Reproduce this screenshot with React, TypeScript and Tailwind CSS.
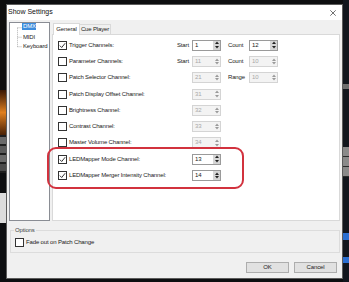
import React from "react";

type Spin = { value: string; enabled: boolean };
type Row = {
  label: string;
  checked: boolean;
  first?: Spin;
  firstLabel?: string;
  second?: Spin;
  secondLabel?: string;
};

const rows: Row[] = [
  { label: "Trigger Channels:", checked: true, firstLabel: "Start", first: { value: "1", enabled: true }, secondLabel: "Count", second: { value: "12", enabled: true } },
  { label: "Parameter Channels:", checked: false, firstLabel: "Start", first: { value: "11", enabled: false }, secondLabel: "Count", second: { value: "10", enabled: false } },
  { label: "Patch Selector Channel:", checked: false, first: { value: "21", enabled: false }, secondLabel: "Range", second: { value: "10", enabled: false } },
  { label: "Patch Display Offset Channel:", checked: false, first: { value: "31", enabled: false } },
  { label: "Brightness Channel:", checked: false, first: { value: "32", enabled: false } },
  { label: "Contrast Channel:", checked: false, first: { value: "33", enabled: false } },
  { label: "Master Volume Channel:", checked: false, first: { value: "34", enabled: false } },
  { label: "LEDMapper Mode Channel:", checked: true, first: { value: "13", enabled: true } },
  { label: "LEDMapper Merger Intensity Channel:", checked: true, first: { value: "14", enabled: true } },
];

function CheckBox({ checked }: { checked: boolean }) {
  return (
    <div className="w-[9px] h-[9px] shrink-0 border border-[#333] bg-white flex items-center justify-center">
      {checked && (
        <svg width="7" height="7" viewBox="0 0 7 7">
          <path d="M0.8 3.6 L2.7 5.5 L6.2 1.2" fill="none" stroke="#222" strokeWidth="0.9" />
        </svg>
      )}
    </div>
  );
}

function Arrow({ up, color }: { up: boolean; color: string }) {
  return (
    <svg width="4" height="3" viewBox="0 0 4 3">
      <path d={up ? "M0 3 L2 0.5 L4 3 Z" : "M0 0 L2 2.5 L4 0 Z"} fill={color} />
    </svg>
  );
}

function SpinBox({ spin }: { spin: Spin }) {
  const on = spin.enabled;
  return (
    <div
      className={`w-[29px] h-[11px] flex border ${
        on ? "border-[#9a9a9a] bg-white text-[#222]" : "border-[#d4d4d4] bg-[#f3f3f3] text-[#a8a8a8]"
      }`}
    >
      <div className="flex-1 pl-[2px] leading-[9px]">{spin.value}</div>
      <div className={`w-[7px] flex flex-col ${on ? "bg-[#d6d6d6]" : ""}`}>
        <div className="flex-1 flex items-center justify-center">
          <Arrow up color={on ? "#222" : "#9a9a9a"} />
        </div>
        <div className="flex-1 flex items-center justify-center">
          <Arrow up={false} color={on ? "#222" : "#9a9a9a"} />
        </div>
      </div>
    </div>
  );
}

function SettingRow({ row }: { row: Row }) {
  return (
    <div className="h-[16.3px] flex items-center">
      <div className="w-[119px] flex items-center gap-[2px]">
        <CheckBox checked={row.checked} />
        <span className="text-[#222] whitespace-nowrap">{row.label}</span>
      </div>
      <div className="w-[15px] text-[#222]">{row.firstLabel}</div>
      {row.first && <SpinBox spin={row.first} />}
      <div className="w-[7px]" />
      <div className="w-[21px] text-[#222]">{row.secondLabel}</div>
      {row.second && <SpinBox spin={row.second} />}
    </div>
  );
}

export default function App() {
  return (
    <div className="w-[349px] h-[282px] bg-[#0d0e10] flex overflow-hidden font-['Liberation_Sans',Arial,sans-serif] text-[6px] tracking-[-0.15px]">
      {/* ---------- background, left ---------- */}
      <div className="w-[6px] flex flex-col">
        <div className="h-[90px] bg-[#0e0e0e]" />
        <div className="h-[45px] bg-gradient-to-b from-[#3a1805] via-[#e0801e] to-[#4a2206]" />
        <div className="h-[38px] flex flex-col gap-[2px] py-[2px] bg-[#1e1e1e]">
          <div className="h-[7px] bg-[#6a6a6a]" />
          <div className="h-[7px] bg-[#5a5a5a]" />
          <div className="h-[7px] bg-[#6a6a6a]" />
          <div className="h-[7px] bg-[#4a4a4a]" />
        </div>
        <div className="h-[20px]" />
        <div className="h-[30px] bg-[#dcdcdc]" />
      </div>

      {/* ---------- dialog ---------- */}
      <div className="relative w-[337px] h-[275px] mt-[4px] border border-[#5c5c5c] bg-[#f0f0f0] flex flex-col">
        <div className="h-[15px] bg-white flex items-center justify-between pl-[1px] pr-[6px]">
          <span className="text-[7px] text-[#111] tracking-[0px]">Show Settings</span>
          <svg width="6" height="6" viewBox="0 0 6 6">
            <path d="M0.3 0.3 L5.7 5.7 M5.7 0.3 L0.3 5.7" stroke="#333" strokeWidth="0.7" />
          </svg>
        </div>

        <div className="flex-1 flex flex-col px-[2px]">
          <div className="mt-[2px] h-[199px] flex gap-[2px]">
            {/* ---------- tree ---------- */}
            <div className="w-[41px] border border-[#8a8d94] bg-white flex pl-[7px]">
              <svg width="5" height="30" viewBox="0 0 5 30" className="shrink-0">
                <path
                  d="M0.5 4.75 V23.75 M0.5 4.75 H5 M0.5 14.25 H5 M0.5 23.75 H5"
                  stroke="#a0a0a0"
                  strokeWidth="0.8"
                  strokeDasharray="1 1"
                  fill="none"
                />
              </svg>
              <div className="flex flex-col">
                <div className="h-[9.5px] flex items-start">
                  <span className="bg-[#3d8cdc] text-white px-[1px] leading-[7px] h-[7px] w-[14px]">DMX</span>
                </div>
                <div className="h-[9.5px] flex items-center px-[1px] text-[#222]">MIDI</div>
                <div className="h-[9.5px] flex items-center px-[1px] text-[#222]">Keyboard</div>
              </div>
            </div>

            {/* ---------- tabs ---------- */}
            <div className="flex-1 flex flex-col">
              <div className="h-[12px] flex items-end pl-[1px]">
                <div className="h-[12px] w-[27px] bg-white border border-b-0 border-[#d9d9d9] flex items-center justify-center text-[#222] -mb-px z-10">
                  General
                </div>
                <div className="h-[10px] w-[31px] bg-[#f0f0f0] border border-l-0 border-b-0 border-[#d9d9d9] flex items-center justify-center text-[#222]">
                  Cue Player
                </div>
              </div>
              <div className="flex-1 bg-white border border-[#d9d9d9] pl-[5px] pt-[2px]">
                {rows.map((r) => (
                  <SettingRow key={r.label} row={r} />
                ))}
              </div>
            </div>
          </div>

          {/* ---------- options ---------- */}
          <fieldset className="mt-[6px] ml-px mr-0 border border-[#dcdcdc] px-[4px] pb-[5px] pt-[4px]">
            <legend className="px-[1px] ml-[-1px] leading-[7px] text-[#444]">Options</legend>
            <div className="flex items-center gap-[2px]">
              <CheckBox checked={false} />
              <span className="text-[#222]">Fade out on Patch Change</span>
            </div>
          </fieldset>

          {/* ---------- buttons ---------- */}
          <div className="mt-auto mb-[5px] flex justify-end gap-[5px] pr-[3px]">
            <button className="w-[43px] h-[11px] bg-[#e1e1e1] border border-[#adadad] text-[#222] leading-[9px]">
              OK
            </button>
            <button className="w-[43px] h-[11px] bg-[#e1e1e1] border border-[#adadad] text-[#222] leading-[9px]">
              Cancel
            </button>
          </div>
        </div>

        {/* ---------- highlight annotation ---------- */}
        <div className="absolute left-[40px] top-[142px] w-[197px] h-[42px] border-2 border-[#d2323e] rounded-[9px] pointer-events-none" />
      </div>

      {/* ---------- background, right ---------- */}
      <div className="w-[6px] flex flex-col bg-[#12161d]">
        <div className="h-[84px]" />
        <div className="h-[5px] bg-[#6e6e6e]" />
        <div className="h-[58px]" />
        <div className="h-[30px] flex flex-col gap-[1px] bg-[#2a2a2a]">
          <div className="h-[9px] bg-[#8a8a8a]" />
          <div className="h-[9px] bg-[#8a8a8a]" />
          <div className="h-[9px] bg-[#8a8a8a]" />
        </div>
        <div className="h-[56px]" />
        <div className="h-[7px] bg-[#2c6fd1]" />
        <div className="h-[17px]" />
        <div className="h-[6px] bg-[#2c6fd1]" />
      </div>
    </div>
  );
}
